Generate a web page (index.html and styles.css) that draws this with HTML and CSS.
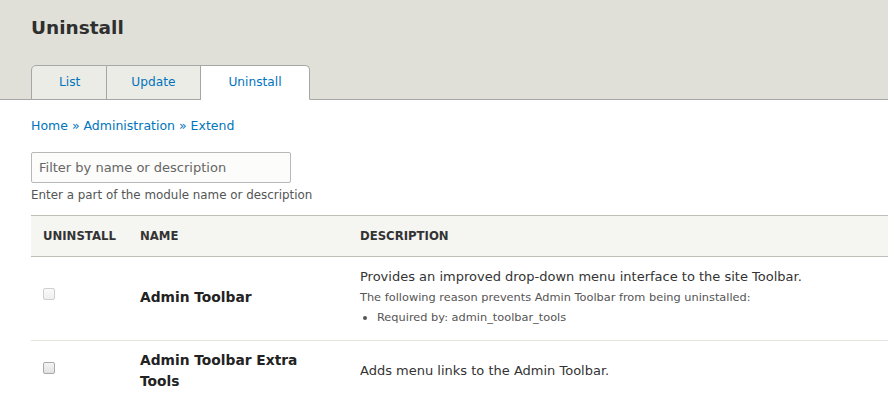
FILE: index.html
```html
<!DOCTYPE html>
<html lang="en">
<head>
  <meta charset="UTF-8">
  <title>Uninstall</title>
  <link rel="stylesheet" href="styles.css">
</head>
<body>
  <header class="page-header">
    <h1 class="page-title">Uninstall</h1>
    <ul class="tabs">
      <li><a href="#">List</a></li>
      <li><a href="#">Update</a></li>
      <li class="active"><a href="#">Uninstall</a></li>
    </ul>
  </header>

  <main class="content">
    <nav class="breadcrumb">
      <a href="#">Home</a> &raquo; <a href="#">Administration</a> &raquo; <a href="#">Extend</a>
    </nav>

    <div class="filter">
      <input type="text" class="filter-input" placeholder="Filter by name or description">
      <div class="filter-help">Enter a part of the module name or description</div>
    </div>

    <table class="modules">
      <thead>
        <tr>
          <th class="col-check">Uninstall</th>
          <th class="col-name">Name</th>
          <th>Description</th>
        </tr>
      </thead>
      <tbody>
        <tr>
          <td class="col-check"><input type="checkbox" disabled></td>
          <td class="col-name"><label>Admin Toolbar</label></td>
          <td class="desc">
            <div>Provides an improved drop-down menu interface to the site Toolbar.</div>
            <div class="reason">The following reason prevents Admin Toolbar from being uninstalled:</div>
            <ul class="reasons">
              <li>Required by: admin_toolbar_tools</li>
            </ul>
          </td>
        </tr>
        <tr>
          <td class="col-check"><input type="checkbox"></td>
          <td class="col-name"><label>Admin Toolbar Extra Tools</label></td>
          <td class="desc">Adds menu links to the Admin Toolbar.</td>
        </tr>
      </tbody>
    </table>
  </main>
</body>
</html>
```

FILE: styles.css
```css
body {
  margin: 0;
  font-family: "DejaVu Sans", "Lucida Grande", sans-serif;
  font-size: 13px;
  color: #333;
  background: #fff;
  overflow: hidden;
}

a {
  color: #0074bd;
  text-decoration: none;
}

.page-header {
  background: #e0e0d8;
  border-bottom: 1px solid #a6a6a6;
  padding: 0 31px;
}

.page-title {
  margin: 0;
  padding: 17px 0 0;
  height: 65px;
  box-sizing: border-box;
  line-height: 22px;
  font-size: 18.5px;
  font-weight: bold;
  color: #2f2f2f;
}

.tabs {
  list-style: none;
  margin: 0 0 -1px;
  padding: 0;
  display: flex;
}

.tabs li {
  background: #ecece6;
  border: 1px solid #a6a6a6;
  border-left: none;
  height: 35px;
  box-sizing: border-box;
}

.tabs li:first-child {
  border-left: 1px solid #a6a6a6;
  border-top-left-radius: 5px;
}

.tabs li:last-child {
  border-top-right-radius: 5px;
}

.tabs li.active {
  background: #fff;
  border-bottom-color: #fff;
}

.tabs a {
  display: block;
  line-height: 33px;
  font-size: 12.2px;
  padding: 0 25px 0 24px;
}

.tabs li:first-child a {
  padding: 0 26px 0 27px;
}

.tabs li.active a {
  padding: 0 27px;
}

.content {
  padding: 0 0 0 31px;
}

.breadcrumb {
  margin-top: 17px;
  line-height: 18px;
  font-size: 12.5px;
  color: #0074bd;
}

.filter {
  margin-top: 17px;
}

.filter-input {
  display: block;
  width: 260px;
  height: 31px;
  box-sizing: border-box;
  border: 1px solid #b8b8b8;
  border-radius: 2px;
  background: #fcfcfa;
  padding: 0 7px;
  font-family: inherit;
  font-size: 13px;
  color: #333;
}

.filter-input::placeholder {
  color: #666;
}

.filter-help {
  margin-top: 5px;
  font-size: 11.9px;
  line-height: 14px;
  color: #555;
}

.modules {
  margin-top: 13px;
  width: 100%;
  border-collapse: collapse;
}

.modules th {
  background: #f5f5f2;
  border-top: 1px solid #bfbfba;
  border-bottom: 1px solid #bfbfba;
  height: 40px;
  padding: 0 12px;
  text-align: left;
  text-transform: uppercase;
  font-size: 11.7px;
  font-weight: bold;
  color: #333;
}

.modules td {
  padding: 9px 12px 12px;
  border-bottom: 1px solid #e6e4df;
  vertical-align: middle;
}

.modules tbody tr:first-child td {
  height: 62px;
}

.modules .col-check {
  width: 73px;
}

.modules .col-name {
  width: 196px;
}

.col-name label {
  font-size: 13.8px;
  font-weight: bold;
  color: #222;
  line-height: 21px;
}

.col-check input {
  appearance: none;
  display: block;
  margin: 0 0 6px;
  width: 12px;
  height: 12px;
  border: 1px solid #a9a9a9;
  border-radius: 2px;
  background: linear-gradient(#f4f4f4, #e2e2e2);
}

.col-check input:disabled {
  border-color: #d0d0d0;
  background: linear-gradient(#fafafa, #efefef);
}

.desc {
  line-height: 20px;
}

.reason {
  font-size: 11.35px;
  color: #555;
}

.reasons {
  margin: 0;
  padding-left: 17px;
  font-size: 11.35px;
  color: #555;
}
```
